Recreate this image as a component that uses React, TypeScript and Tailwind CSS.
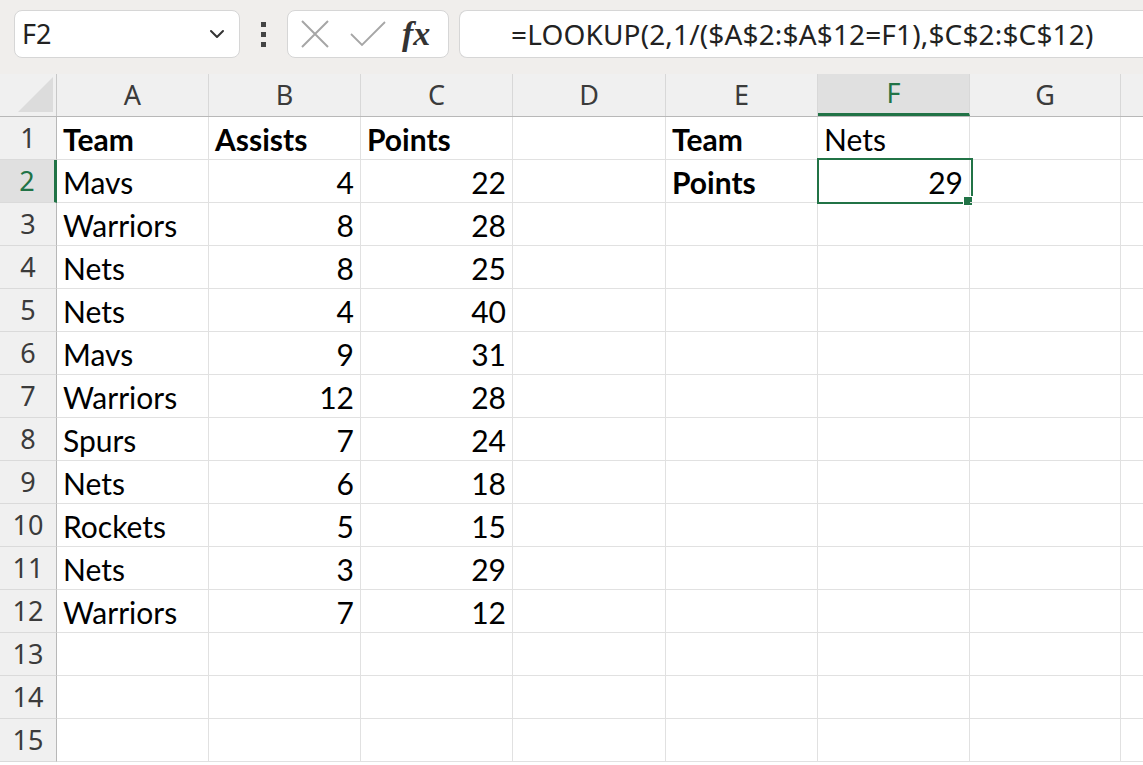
import { ChevronDown } from "lucide-react";

type Cell = { v: string; bold?: boolean; right?: boolean };

const cols = ["A", "B", "C", "D", "E", "F", "G"];
const colW = ["w-[152px]", "w-[152px]", "w-[152px]", "w-[153px]", "w-[152px]", "w-[152px]", "w-[151px]"];

const data: [string, string, string][] = [
  ["Mavs", "4", "22"],
  ["Warriors", "8", "28"],
  ["Nets", "8", "25"],
  ["Nets", "4", "40"],
  ["Mavs", "9", "31"],
  ["Warriors", "12", "28"],
  ["Spurs", "7", "24"],
  ["Nets", "6", "18"],
  ["Rockets", "5", "15"],
  ["Nets", "3", "29"],
  ["Warriors", "7", "12"],
];

function buildRows(): Cell[][] {
  const rows: Cell[][] = [];
  for (let r = 1; r <= 15; r++) {
    const row: Cell[] = cols.map(() => ({ v: "" }));
    if (r === 1) {
      row[0] = { v: "Team", bold: true };
      row[1] = { v: "Assists", bold: true };
      row[2] = { v: "Points", bold: true };
      row[4] = { v: "Team", bold: true };
      row[5] = { v: "Nets" };
    } else if (r <= 12) {
      const d = data[r - 2];
      row[0] = { v: d[0] };
      row[1] = { v: d[1], right: true };
      row[2] = { v: d[2], right: true };
      if (r === 2) {
        row[4] = { v: "Points", bold: true };
        row[5] = { v: "29", right: true };
      }
    }
    rows.push(row);
  }
  return rows;
}

const cellFont = "font-['Lato','Noto_Sans',sans-serif]";
const uiFont = "font-['Noto_Sans','Open_Sans',sans-serif]";

function Toolbar() {
  return (
    <div className="flex h-[74px] items-start bg-[#f0eeec] pt-[10px]">
      {/* name box */}
      <div className="ml-[14px] flex h-[48px] w-[226px] items-center justify-between rounded-lg border border-[#d6d6d6] bg-white pl-[7px] pr-[10px]">
        <span className={`${uiFont} text-[27px] text-[#222]`}>F2</span>
        <ChevronDown size={24} strokeWidth={2} className="text-[#333]" />
      </div>
      <div className="flex h-[48px] w-[47px] flex-col items-center justify-center gap-[5px]">
        <span className="h-[5px] w-[5px] bg-[#444]" />
        <span className="h-[5px] w-[5px] bg-[#444]" />
        <span className="h-[5px] w-[5px] bg-[#444]" />
      </div>
      {/* cancel / enter / fx */}
      <div className="flex h-[48px] w-[162px] items-center rounded-lg border border-[#d6d6d6] bg-white pl-[13px]">
        <svg width="28" height="28" viewBox="0 0 28 28" className="mr-[21px]">
          <path d="M1 1 L27 27 M27 1 L1 27" stroke="#a6a6a6" strokeWidth="2" fill="none" />
        </svg>
        <svg width="36" height="28" viewBox="0 0 36 28" className="mr-[16px]">
          <path d="M1 14 L12 25 L35 2" stroke="#a6a6a6" strokeWidth="1.8" fill="none" />
        </svg>
        <span className="font-['Liberation_Serif',serif] text-[34px] font-bold italic leading-none text-[#333]">fx</span>
      </div>
      {/* formula */}
      <div className="ml-[10px] flex h-[48px] flex-1 items-center rounded-l-lg border border-r-0 border-[#d6d6d6] bg-white pl-[51px]">
        <span className={`${uiFont} whitespace-nowrap text-[28px] tracking-[0.15px] text-[#222]`}>
          =LOOKUP(2,1/($A$2:$A$12=F1),$C$2:$C$12)
        </span>
      </div>
    </div>
  );
}

function HeaderRow() {
  return (
    <div className="flex h-[43px] border-b border-[#b8b8b8] bg-[#f0f0f0]">
      <div className="relative w-[57px] shrink-0 border-r border-[#c8c8c8]">
        <div className="absolute bottom-[4px] right-[3px] h-0 w-0 border-b-[35px] border-l-[35px] border-b-[#dcdcdc] border-l-transparent" />
      </div>
      {cols.map((c, i) => (
        <div
          key={c}
          className={`${colW[i]} flex shrink-0 items-center justify-center border-r border-[#d8d8d8] ${uiFont} text-[27px] ${
            c === "F" ? "border-b-[3px] border-b-[#217346] bg-[#e0e0e0] text-[#217346]" : "text-[#3b3b3b]"
          }`}
        >
          {c}
        </div>
      ))}
      <div className="flex-1" />
    </div>
  );
}

export default function App() {
  const rows = buildRows();
  return (
    <div className="h-[765px] w-[1143px] overflow-hidden bg-white">
      <Toolbar />
      <HeaderRow />
      {rows.map((row, ri) => {
        const r = ri + 1;
        const sel = r === 2;
        return (
          <div key={r} className={`flex h-[43px] ${sel ? "relative z-10" : ""}`}>
            <div
              className={`flex w-[57px] shrink-0 items-center justify-center border-b border-[#dadada] ${uiFont} text-[27px] ${
                sel
                  ? "border-r-[3px] border-r-[#217346] bg-[#e0e0e0] text-[#217346]"
                  : "border-r border-r-[#b8b8b8] bg-[#f0f0f0] text-[#3b3b3b]"
              }`}
            >
              {r}
            </div>
            {row.map((cell, ci) => {
              const active = sel && ci === 5;
              return (
                <div
                  key={ci}
                  className={`relative ${colW[ci]} flex shrink-0 items-center border-b border-r border-[#e1e1e1] px-[6px] pt-[2px] ${cellFont} text-[30px] text-black ${
                    cell.right ? "justify-end" : ""
                  } ${cell.bold ? "font-bold" : ""}`}
                >
                  {cell.v}
                  {active && (
                    <>
                      <div className="absolute -left-[1px] -top-[2px] h-[46px] w-[156px] border-2 border-[#217346]" />
                      <div className="absolute -bottom-[4px] -right-[4px] h-[10px] w-[10px] border-[1.5px] border-white bg-[#217346]" />
                    </>
                  )}
                </div>
              );
            })}
            <div className="flex-1 border-b border-[#e1e1e1]" />
          </div>
        );
      })}
    </div>
  );
}
